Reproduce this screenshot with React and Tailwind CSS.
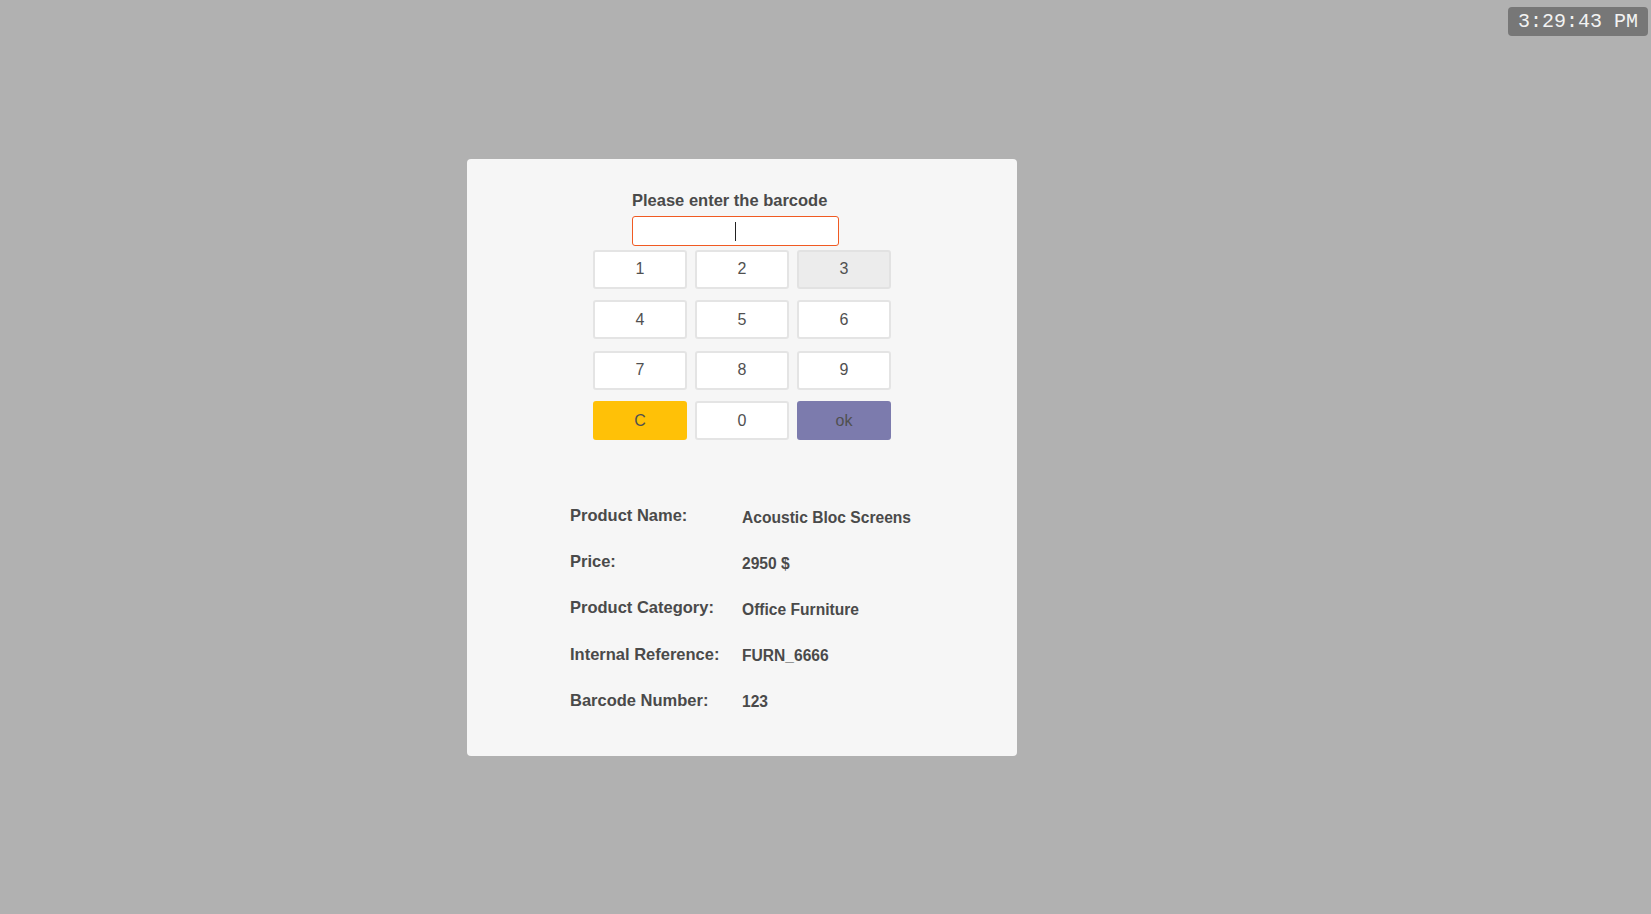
import React, { useState } from "react";

const keys = ["1", "2", "3", "4", "5", "6", "7", "8", "9", "C", "0", "ok"];

const details = [
  ["Product Name:", "Acoustic Bloc Screens"],
  ["Price:", "2950 $"],
  ["Product Category:", "Office Furniture"],
  ["Internal Reference:", "FURN_6666"],
  ["Barcode Number:", "123"],
];

const keyStyle = (k) => {
  if (k === "C") return "bg-[#ffc107] border-2 border-[#ffc107]";
  if (k === "ok") return "bg-[#7c7bad] border-2 border-[#7c7bad]";
  if (k === "3") return "bg-[#ececec] border-2 border-[#e2e2e2]";
  return "bg-white border-2 border-[#e4e4e4]";
};

export default function App() {
  const [code, setCode] = useState("");

  return (
    <div className="relative h-[914px] w-full bg-[#b1b1b1] flex items-center pl-[467px] font-['Liberation_Sans',Arial,sans-serif] text-[#4a4a4a]">
      {/* clock */}
      <div className="absolute top-[7px] right-[3px] w-[140px] h-[29px] rounded-[4px] bg-[#777777] flex items-center pl-[10px] font-['Liberation_Mono',monospace] text-[20px] leading-none text-[#f2f2f2]">
        3:29:43 PM
      </div>

      {/* card */}
      <div className="w-[550px] h-[597px] bg-[#f6f6f6] rounded-[4px] flex flex-col items-center pt-[32px]">
        <div className="flex flex-col mr-[13px] w-[207px]">
          <label className="text-[16.5px] leading-[19px] font-bold whitespace-nowrap">
            Please enter the barcode
          </label>
          <div className="relative mt-[6px]">
            <input
              value={code}
              onChange={(e) => setCode(e.target.value)}
              className="w-[207px] h-[30px] bg-white border border-[#f05a22] rounded-[3px] text-center outline-none"
            />
            <span className="absolute left-[103px] top-[6px] w-px h-[19px] bg-[#222]" />
          </div>
        </div>

        <div className="mt-[4px] grid grid-cols-[94px_94px_94px] gap-x-[8px] gap-y-[11.5px]">
          {keys.map((k) => (
            <button
              key={k}
              onClick={() => {
                if (k === "C") setCode("");
                else if (k !== "ok") setCode(code + k);
              }}
              className={`h-[39px] rounded-[3px] text-[16px] text-[#505050] ${keyStyle(k)}`}
            >
              {k}
            </button>
          ))}
        </div>

        <div className="mt-[66px] flex flex-col">
          {details.map(([label, value]) => (
            <div key={label} className="grid grid-cols-[172px_172px] h-[46.2px]">
              <div className="text-[16.5px] leading-[19px] font-bold whitespace-nowrap">{label}</div>
              <div className="text-[15.6px] leading-[19px] font-bold pt-[1.5px] whitespace-nowrap">{value}</div>
            </div>
          ))}
        </div>
      </div>
    </div>
  );
}
